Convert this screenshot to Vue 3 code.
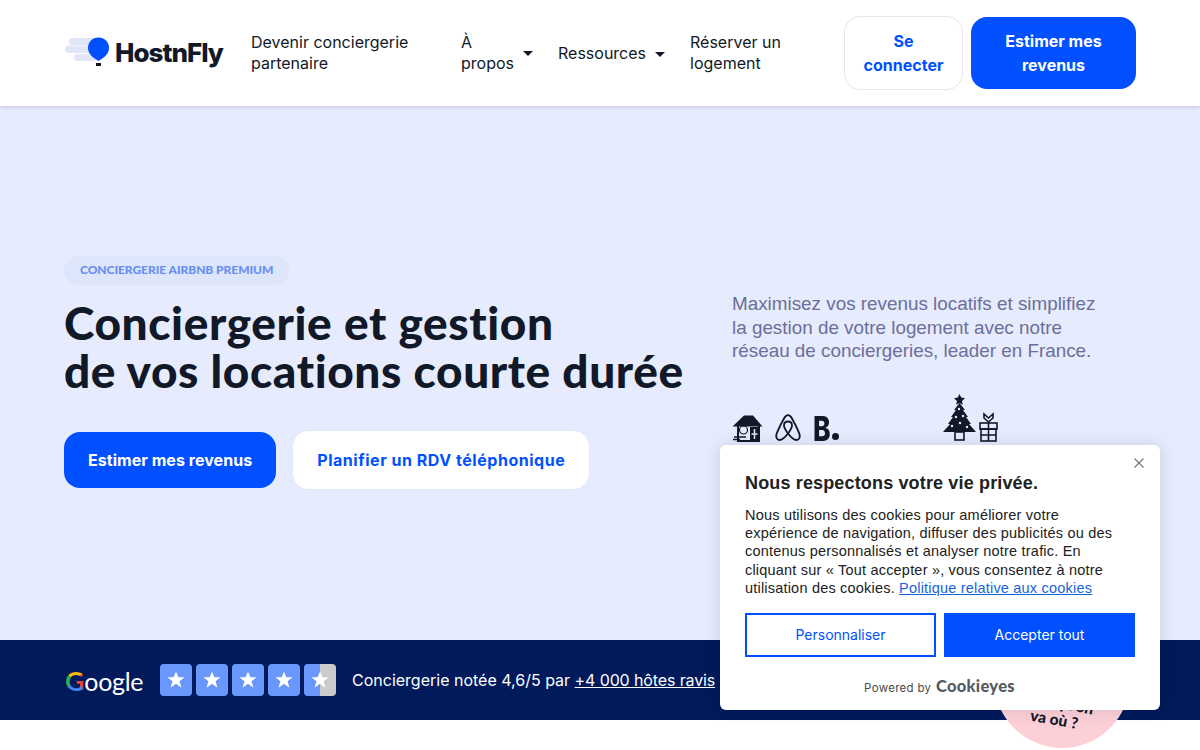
<script setup>
const nav = [
  { label: 'À propos', caret: true, cls: 'about' },
  { label: 'Ressources', caret: true, cls: 'res' },
  { label: 'Réserver un logement', caret: false, cls: 'book' },
]
const stars = [1, 2, 3, 4, 5]
</script>

<template>
  <div class="page">
    <header class="header">
      <a class="logo">
        <svg class="logo-mark" width="46" height="30" viewBox="0 0 46 30">
          <rect x="4" y="1" width="30" height="7" rx="3.5" fill="#e1e5f8" />
          <rect x="0" y="8.500" width="30" height="7.500" rx="3.700" fill="#e1e5f8" />
          <rect x="9" y="17" width="24" height="7" rx="3.500" fill="#e1e5f8" />
          <path d="M33.5 0.5C39.5 0.5 44 5 44 11C44 17 38.500 21 33.500 24C28.500 21 23 17 23 11C23 5 27.500 0.5 33.500 0.5Z" fill="#0050ff" />
          <rect x="31" y="26" width="5" height="3" fill="#111827" />
        </svg>
        <span class="logo-text">HostnFly</span>
      </a>
      <nav class="nav">
        <a class="nav-link partner">Devenir conciergerie partenaire</a>
        <a v-for="item in nav" :key="item.label" class="nav-link" :class="item.cls">
          <span>{{ item.label }}</span>
          <i v-if="item.caret" class="caret"></i>
        </a>
      </nav>
      <div class="actions">
        <a class="btn-login">Se connecter</a>
        <a class="btn-estimate">Estimer mes revenus</a>
      </div>
    </header>

    <section class="hero">
      <div class="hero-left">
        <span class="tag">CONCIERGERIE AIRBNB PREMIUM</span>
        <h1>Conciergerie et gestion<br />de vos locations courte durée</h1>
        <div class="cta">
          <a class="cta-main">Estimer mes revenus</a>
          <a class="cta-alt">Planifier un RDV téléphonique</a>
        </div>
      </div>
      <div class="hero-right">
        <p>Maximisez vos revenus locatifs et simplifiez<br />la gestion de votre logement avec notre<br />réseau de conciergeries, leader en France.</p>
        <div class="brands">
          <div class="platforms">
            <svg width="31" height="28" viewBox="0 0 31 28" fill="none">
              <path d="M0.500 12.500L12 1.500H21L30.500 12.500Z" fill="#111827" />
              <path d="M6 11V27H27V11" stroke="#111827" stroke-width="2" />
              <rect x="18" y="13" width="9" height="14" fill="#111827" />
              <path d="M22.500 15V25M19.500 20H25.500" stroke="#e6ebfd" stroke-width="1.500" />
              <circle cx="11.500" cy="16" r="4" stroke="#111827" stroke-width="1.200" />
              <path d="M2 23H14M1 25.500H8" stroke="#111827" stroke-width="1.600" />
            </svg>
            <svg width="26" height="28" viewBox="0 0 26 28" fill="none">
              <path d="M13 19.500C10 15.500 9 13.500 9 11.500C9 9 10.700 7.500 13 7.500C15.300 7.500 17 9 17 11.500C17 13.500 16 15.500 13 19.500ZM13 19.500C9.500 24 7 26 4.700 26C2.500 26 1.200 24 1.200 22C1.200 19.500 3 15.500 9 4.500C10.200 2.300 11.300 1.200 13 1.200C14.700 1.200 15.800 2.300 17 4.500C23 15.500 24.800 19.500 24.800 22C24.800 24 23.500 26 21.300 26C19 26 16.500 24 13 19.500Z" stroke="#111827" stroke-width="1.800" />
            </svg>
            <span class="booking"><span class="booking-b">B</span><i class="booking-dot"></i></span>
          </div>
          <svg class="xmas" width="56" height="48" viewBox="0 0 56 48" fill="none">
            <path d="M16.500 0L18.200 3.600L22 4.200L19 7L19.800 10.800L16.500 9L13.200 10.800L14 7L11 4.200L14.800 3.600Z" fill="#111827" />
            <path d="M16.500 9L22 16H20L25 23H23L28 30H26L33 38H0L7 30H5L10 23H8L13 16H11Z" fill="#111827" />
            <rect x="12" y="38" width="9" height="8" stroke="#111827" stroke-width="1.600" />
            <circle cx="16" cy="15" r="1.200" fill="#e6ebfd" /><circle cx="13" cy="23" r="1.200" fill="#e6ebfd" />
            <circle cx="20" cy="22" r="1.200" fill="#e6ebfd" /><circle cx="9" cy="32" r="1.200" fill="#e6ebfd" />
            <circle cx="17" cy="29" r="1.200" fill="#e6ebfd" /><circle cx="24" cy="33" r="1.200" fill="#e6ebfd" />
            <rect x="37" y="29" width="17" height="6" stroke="#111827" stroke-width="1.600" />
            <rect x="38" y="35" width="15" height="12" stroke="#111827" stroke-width="1.600" />
            <path d="M45.500 29V47M38 41H53" stroke="#111827" stroke-width="1.600" />
            <path d="M45.500 28L41 24V20L45.500 24L50 20V24Z" stroke="#111827" stroke-width="1.600" />
          </svg>
        </div>
      </div>
    </section>

    <section class="rating">
      <span class="google"><b class="g-letter">G</b>oogle</span>
      <div class="stars">
        <span v-for="n in stars" :key="n" class="star" :class="{ partial: n === 5 }">
          <svg width="18" height="18" viewBox="0 0 20 20"><path d="M10 0.500L12.600 7H19.500L14 11.300L16 18.500L10 14.300L4 18.500L6 11.300L0.500 7H7.400Z" fill="#fff" /></svg>
        </span>
      </div>
      <p>Conciergerie notée 4,6/5 par <u>+4 000 hôtes ravis</u></p>
    </section>

    <div class="bubble"><span>c'est qu'on<br />va où ?</span></div>

    <aside class="cookie">
      <button class="close" aria-label="Fermer">
        <svg width="10" height="10" viewBox="0 0 10 10"><path d="M0.500 0.500L9.500 9.500M9.500 0.500L0.500 9.500" stroke="#6b7280" stroke-width="1.100" /></svg>
      </button>
      <h2>Nous respectons votre vie privée.</h2>
      <p>Nous utilisons des cookies pour améliorer votre expérience de navigation, diffuser des publicités ou des contenus personnalisés et analyser notre trafic. En cliquant sur « Tout accepter », vous consentez à notre utilisation des cookies. <a>Politique relative aux cookies</a></p>
      <div class="cookie-btns">
        <button class="custom">Personnaliser</button>
        <button class="accept">Accepter tout</button>
      </div>
      <div class="powered">Powered by <strong>Cookieyes</strong></div>
    </aside>
  </div>
</template>

<style scoped>
.page {
  position: relative;
  width: 1200px;
  height: 750px;
  overflow: hidden;
  background: #fff;
  font-family: Inter, "Liberation Sans", sans-serif;
  color: #111827;
}
.header {
  position: relative;
  z-index: 1;
  display: flex;
  align-items: center;
  height: 106px;
  box-sizing: border-box;
  padding: 0 64px 0 65px;
  background: #fff;
  box-shadow: 0 1px 4px rgba(17, 24, 39, 0.18);
}
.logo {
  display: flex;
  align-items: center;
  width: 186px;
  flex: none;
}
.logo-mark {
  margin-right: 4px;
  margin-bottom: 2px;
}
.logo-text {
  font-family: Inter, sans-serif;
  font-weight: 800;
  font-size: 26px;
  letter-spacing: -1px;
  line-height: 30px;
  color: #111827;
}
.nav {
  display: flex;
  align-items: center;
  flex: 1;
  font-size: 16px;
  line-height: 21.500px;
}
.nav-link {
  display: flex;
  align-items: center;
}
.partner { width: 185px; margin-right: 25px; }
.about { width: 72px; margin-right: 25px; justify-content: space-between; }
.about span { width: 60px; }
.res { margin-right: 25px; gap: 9px; padding-top: 2px; }
.book { width: 120px; }
.caret {
  display: inline-block;
  width: 0;
  height: 0;
  border-left: 5px solid transparent;
  border-right: 5px solid transparent;
  border-top: 5px solid #111827;
}
.actions {
  display: flex;
  align-items: center;
  gap: 8px;
}
.actions a {
  box-sizing: border-box;
  display: flex;
  align-items: center;
  justify-content: center;
  border-radius: 16px;
  text-align: center;
  font-weight: 700;
  font-size: 16px;
  line-height: 24px;
}
.btn-login {
  width: 119px;
  height: 74px;
  padding: 0 16px;
  background: #fff;
  border: 1px solid #e4e7f2;
  color: #0050ff;
}
.btn-estimate {
  width: 165px;
  height: 72px;
  padding: 0 24px;
  background: #0050ff;
  color: #fff;
}
.hero {
  display: flex;
  height: 534px;
  box-sizing: border-box;
  padding: 150px 0 0 64px;
  background: #e6ebfd;
}
.hero-left {
  width: 668px;
  flex: none;
}
.tag {
  display: inline-block;
  padding: 0 16px;
  height: 29px;
  line-height: 28px;
  border-radius: 15px;
  background: #dde5fb;
  color: #6a8ff0;
  font-family: Lato, sans-serif;
  font-weight: 900;
  font-size: 12px;
  letter-spacing: -0.05px;
}
h1 {
  margin: 14px 0 0;
  font-family: Lato, sans-serif;
  font-variant-ligatures: none;
  font-weight: 900;
  font-size: 46px;
  letter-spacing: 0.6px;
  line-height: 48px;
  color: #111827;
  white-space: nowrap;
}
.cta {
  display: flex;
  gap: 16px;
  margin-top: 35px;
  align-items: center;
}
.cta a {
  display: flex;
  align-items: center;
  box-sizing: border-box;
  height: 56px;
  border-radius: 16px;
  font-weight: 700;
  font-size: 16px;
}
.cta-main {
  padding: 0 24px;
  background: #0050ff;
  color: #fff;
  letter-spacing: 0.05px;
}
.cta-alt {
  height: 60px !important;
  padding: 0 24px;
  background: #fff;
  border: 1px solid #e4e7f2;
  color: #0050ff;
  letter-spacing: 0.53px;
}
.hero-right {
  width: 400px;
  padding-top: 36px;
}
.hero-right p {
  margin: 0;
  font-family: "Liberation Sans", sans-serif;
  font-size: 18.850px;
  line-height: 23.500px;
  color: #6b6f9a;
  white-space: nowrap;
}
.brands {
  display: flex;
  align-items: flex-end;
  margin-top: 31px;
}
.platforms {
  display: flex;
  align-items: flex-end;
  gap: 12px;
  width: 211px;
}
.booking {
  display: flex;
  align-items: flex-end;
  gap: 2px;
  font-family: Inter, sans-serif;
  font-weight: 800;
  font-size: 34px;
  line-height: 27px;
  color: #111827;
}
.booking-b {
  display: block;
  width: 17px;
  transform: scaleX(0.78);
  transform-origin: left;
}
.booking-dot {
  width: 7px;
  height: 7px;
  margin-bottom: 2px;
  border-radius: 50%;
  background: #111827;
}
.rating {
  display: flex;
  align-items: center;
  height: 80px;
  box-sizing: border-box;
  padding-left: 65px;
  background: #001a5c;
  color: #fff;
}
.google {
  width: 95px;
  font-family: Lato, sans-serif;
  font-size: 25px;
  letter-spacing: -0.3px;
  color: #fff;
}
.g-letter {
  font-weight: 700;
  font-size: 27px;
  background: conic-gradient(from 45deg, #ea4335 0 25%, #4285f4 25% 50%, #34a853 50% 75%, #fbbc05 75%);
  -webkit-background-clip: text;
  background-clip: text;
  color: transparent;
}
.stars {
  display: flex;
  gap: 4px;
}
.star {
  display: flex;
  align-items: center;
  justify-content: center;
  width: 32px;
  height: 32px;
  border-radius: 4px;
  background: #6a97fb;
}
.star.partial {
  background: linear-gradient(90deg, #6a97fb 50%, #cbcbcb 50%);
}
.rating p {
  margin: 0 0 0 16px;
  font-size: 16px;
}
.rating u {
  letter-spacing: -0.12px;
}
.bubble {
  position: absolute;
  left: 994px;
  top: 612px;
  width: 136px;
  height: 136px;
  border-radius: 50%;
  background: #fdd0d8;
  display: flex;
  align-items: flex-end;
  justify-content: center;
}
.bubble span {
  margin: 0 12px 20px 0;
  text-align: center;
  font-family: Lato, sans-serif;
  font-weight: 900;
  font-size: 15.500px;
  line-height: 17px;
  color: #111827;
  transform: rotate(10deg);
}
.cookie {
  position: absolute;
  left: 720px;
  top: 445px;
  width: 440px;
  height: 265px;
  box-sizing: border-box;
  padding: 25px;
  background: #fff;
  border-radius: 6px;
  box-shadow: 0 0 18px rgba(0, 0, 0, 0.12);
  font-family: "Liberation Sans", sans-serif;
}
.close {
  position: absolute;
  right: 16px;
  top: 11px;
  padding: 0;
  border: 0;
  background: none;
}
.cookie h2 {
  margin: 1px 0 0;
  font-size: 18px;
  font-weight: 700;
  line-height: 25px;
  letter-spacing: 0.15px;
  color: #212121;
}
.cookie p {
  margin: 10px 0 0;
  max-width: 380px;
  font-size: 14.500px;
  line-height: 18.200px;
  letter-spacing: 0.2px;
  color: #212121;
}
.cookie p a {
  color: #1863dc;
  text-decoration: underline;
}
.cookie-btns {
  display: flex;
  gap: 8px;
  margin-top: 16px;
}
.cookie-btns button {
  flex: 1;
  height: 44px;
  box-sizing: border-box;
  padding-bottom: 2px;
  font-family: Inter, sans-serif;
  font-size: 14px;
  border: 2px solid #0050ff;
}
.custom {
  background: #fff;
  color: #0050ff;
}
.accept {
  background: #0050ff;
  color: #fff;
}
.powered {
  margin-top: 19px;
  padding-right: 1px;
  text-align: center;
  font-family: Inter, sans-serif;
  font-size: 11.500px;
  letter-spacing: 0.3px;
  color: #4a4a4a;
}
.powered strong {
  font-family: Lato, sans-serif;
  font-weight: 900;
  font-size: 16.500px;
  margin-left: 1px;
  color: #555b62;
}
</style>
